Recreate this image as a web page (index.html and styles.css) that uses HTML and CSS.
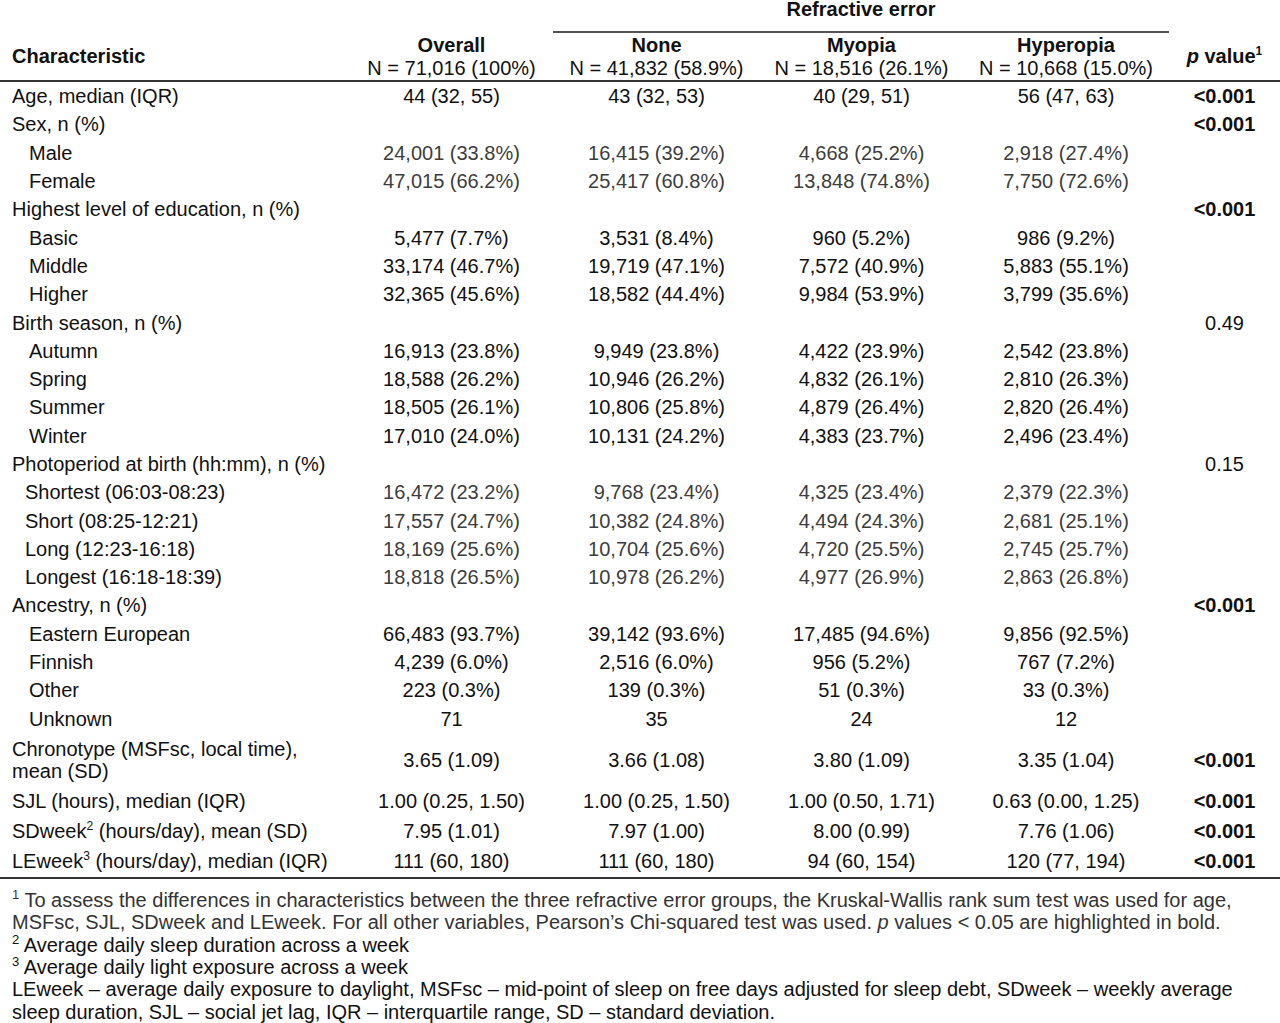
FILE: index.html
```html
<!DOCTYPE html>
<html lang="en">
<head>
    <meta charset="UTF-8">
    <meta name="viewport" content="width=device-width, initial-scale=1.0">
    <title>Refractive Error Characteristics</title>
    <link rel="stylesheet" href="styles.css">
</head>
<body>
    <table class="stats">
        <colgroup>
            <col class="col-char">
            <col class="col-overall">
            <col class="col-none">
            <col class="col-myopia">
            <col class="col-hyper">
            <col class="col-p">
        </colgroup>
        <thead>
            <tr class="head-top">
                <th></th>
                <th></th>
                <th colspan="3" class="spanner">Refractive error</th>
                <th></th>
            </tr>
            <tr class="head-main">
                <th class="label strong">Characteristic</th>
                <th><b>Overall</b><span class="n">N = 71,016 (100%)</span></th>
                <th><b>None</b><span class="n">N = 41,832 (58.9%)</span></th>
                <th><b>Myopia</b><span class="n">N = 18,516 (26.1%)</span></th>
                <th><b>Hyperopia</b><span class="n">N = 10,668 (15.0%)</span></th>
                <th class="strong"><i>p</i> value<sup>1</sup></th>
            </tr>
        </thead>
        <tbody>
            <tr>
                <td class="label">Age, median (IQR)</td>
                <td>44 (32, 55)</td><td>43 (32, 53)</td><td>40 (29, 51)</td><td>56 (47, 63)</td>
                <td class="sig">&lt;0.001</td>
            </tr>
            <tr>
                <td class="label">Sex, n (%)</td>
                <td></td><td></td><td></td><td></td>
                <td class="sig">&lt;0.001</td>
            </tr>
            <tr class="muted">
                <td class="label sub">Male</td>
                <td>24,001 (33.8%)</td><td>16,415 (39.2%)</td><td>4,668 (25.2%)</td><td>2,918 (27.4%)</td><td></td>
            </tr>
            <tr class="muted">
                <td class="label sub">Female</td>
                <td>47,015 (66.2%)</td><td>25,417 (60.8%)</td><td>13,848 (74.8%)</td><td>7,750 (72.6%)</td><td></td>
            </tr>
            <tr>
                <td class="label">Highest level of education, n (%)</td>
                <td></td><td></td><td></td><td></td>
                <td class="sig">&lt;0.001</td>
            </tr>
            <tr>
                <td class="label sub">Basic</td>
                <td>5,477 (7.7%)</td><td>3,531 (8.4%)</td><td>960 (5.2%)</td><td>986 (9.2%)</td><td></td>
            </tr>
            <tr>
                <td class="label sub">Middle</td>
                <td>33,174 (46.7%)</td><td>19,719 (47.1%)</td><td>7,572 (40.9%)</td><td>5,883 (55.1%)</td><td></td>
            </tr>
            <tr>
                <td class="label sub">Higher</td>
                <td>32,365 (45.6%)</td><td>18,582 (44.4%)</td><td>9,984 (53.9%)</td><td>3,799 (35.6%)</td><td></td>
            </tr>
            <tr>
                <td class="label">Birth season, n (%)</td>
                <td></td><td></td><td></td><td></td>
                <td>0.49</td>
            </tr>
            <tr>
                <td class="label sub">Autumn</td>
                <td>16,913 (23.8%)</td><td>9,949 (23.8%)</td><td>4,422 (23.9%)</td><td>2,542 (23.8%)</td><td></td>
            </tr>
            <tr>
                <td class="label sub">Spring</td>
                <td>18,588 (26.2%)</td><td>10,946 (26.2%)</td><td>4,832 (26.1%)</td><td>2,810 (26.3%)</td><td></td>
            </tr>
            <tr>
                <td class="label sub">Summer</td>
                <td>18,505 (26.1%)</td><td>10,806 (25.8%)</td><td>4,879 (26.4%)</td><td>2,820 (26.4%)</td><td></td>
            </tr>
            <tr>
                <td class="label sub">Winter</td>
                <td>17,010 (24.0%)</td><td>10,131 (24.2%)</td><td>4,383 (23.7%)</td><td>2,496 (23.4%)</td><td></td>
            </tr>
            <tr>
                <td class="label">Photoperiod at birth (hh:mm), n (%)</td>
                <td></td><td></td><td></td><td></td>
                <td>0.15</td>
            </tr>
            <tr class="muted">
                <td class="label sub-narrow">Shortest (06:03-08:23)</td>
                <td>16,472 (23.2%)</td><td>9,768 (23.4%)</td><td>4,325 (23.4%)</td><td>2,379 (22.3%)</td><td></td>
            </tr>
            <tr class="muted">
                <td class="label sub-narrow">Short (08:25-12:21)</td>
                <td>17,557 (24.7%)</td><td>10,382 (24.8%)</td><td>4,494 (24.3%)</td><td>2,681 (25.1%)</td><td></td>
            </tr>
            <tr class="muted">
                <td class="label sub-narrow">Long (12:23-16:18)</td>
                <td>18,169 (25.6%)</td><td>10,704 (25.6%)</td><td>4,720 (25.5%)</td><td>2,745 (25.7%)</td><td></td>
            </tr>
            <tr class="muted">
                <td class="label sub-narrow">Longest (16:18-18:39)</td>
                <td>18,818 (26.5%)</td><td>10,978 (26.2%)</td><td>4,977 (26.9%)</td><td>2,863 (26.8%)</td><td></td>
            </tr>
            <tr>
                <td class="label">Ancestry, n (%)</td>
                <td></td><td></td><td></td><td></td>
                <td class="sig">&lt;0.001</td>
            </tr>
            <tr>
                <td class="label sub">Eastern European</td>
                <td>66,483 (93.7%)</td><td>39,142 (93.6%)</td><td>17,485 (94.6%)</td><td>9,856 (92.5%)</td><td></td>
            </tr>
            <tr>
                <td class="label sub">Finnish</td>
                <td>4,239 (6.0%)</td><td>2,516 (6.0%)</td><td>956 (5.2%)</td><td>767 (7.2%)</td><td></td>
            </tr>
            <tr>
                <td class="label sub">Other</td>
                <td>223 (0.3%)</td><td>139 (0.3%)</td><td>51 (0.3%)</td><td>33 (0.3%)</td><td></td>
            </tr>
            <tr>
                <td class="label sub">Unknown</td>
                <td>71</td><td>35</td><td>24</td><td>12</td><td></td>
            </tr>
            <tr class="double">
                <td class="label">Chronotype (MSFsc, local time),<br>mean (SD)</td>
                <td>3.65 (1.09)</td><td>3.66 (1.08)</td><td>3.80 (1.09)</td><td>3.35 (1.04)</td>
                <td class="sig">&lt;0.001</td>
            </tr>
            <tr>
                <td class="label">SJL (hours), median (IQR)</td>
                <td>1.00 (0.25, 1.50)</td><td>1.00 (0.25, 1.50)</td><td>1.00 (0.50, 1.71)</td><td>0.63 (0.00, 1.25)</td>
                <td class="sig">&lt;0.001</td>
            </tr>
            <tr class="tall">
                <td class="label">SDweek<sup>2</sup> (hours/day), mean (SD)</td>
                <td>7.95 (1.01)</td><td>7.97 (1.00)</td><td>8.00 (0.99)</td><td>7.76 (1.06)</td>
                <td class="sig">&lt;0.001</td>
            </tr>
            <tr class="tall">
                <td class="label">LEweek<sup>3</sup> (hours/day), median (IQR)</td>
                <td>111 (60, 180)</td><td>111 (60, 180)</td><td>94 (60, 154)</td><td>120 (77, 194)</td>
                <td class="sig">&lt;0.001</td>
            </tr>
        </tbody>
    </table>

    <div class="notes">
        <p class="muted-note"><sup>1</sup> To assess the differences in characteristics between the three refractive error groups, the Kruskal-Wallis rank sum test was used for age,<br>MSFsc, SJL, SDweek and LEweek. For all other variables, Pearson’s Chi-squared test was used. <i>p</i> values &lt; 0.05 are highlighted in bold.</p>
        <p><sup>2</sup> Average daily sleep duration across a week</p>
        <p><sup>3</sup> Average daily light exposure across a week</p>
        <p>LEweek – average daily exposure to daylight, MSFsc – mid-point of sleep on free days adjusted for sleep debt, SDweek – weekly average<br>sleep duration, SJL – social jet lag, IQR – interquartile range, SD – standard deviation.</p>
    </div>
</body>
</html>
```

FILE: styles.css
```css
body {
    margin: 0;
    background: #ffffff;
    color: #111111;
    font-family: "Liberation Sans", Arial, sans-serif;
    font-size: 20px;
    line-height: 22px;
}
.stats {
    width: 1280px;
    table-layout: fixed;
    border-collapse: collapse;
}
.col-char { width: 350px; }
.col-overall { width: 203px; }
.col-none { width: 207px; }
.col-myopia { width: 203px; }
.col-hyper { width: 206px; }
.col-p { width: 111px; }

.stats th,
.stats td {
    padding: 0;
    text-align: center;
    vertical-align: middle;
    white-space: nowrap;
}
.stats th {
    font-weight: normal;
}
.head-top th {
    height: 31px;
    vertical-align: top;
    line-height: 18px;
}
.head-top .spanner {
    font-weight: bold;
    border-bottom: 2px solid #555555;
}
.head-main th {
    height: 45px;
    line-height: 23px;
    padding-top: 1px;
}
.head-main .n {
    display: block;
}
.head-main th.strong {
    font-weight: bold;
}
.head-main {
    border-bottom: 2px solid #333333;
}
.stats sup {
    font-size: 12px;
    line-height: 0;
    vertical-align: 8px;
}

.stats td {
    height: 28.3px;
}
.stats .label {
    text-align: left;
    padding-left: 12px;
}
.stats .sub {
    padding-left: 29px;
}
.stats .sub-narrow {
    padding-left: 25px;
}
.stats .sig {
    font-weight: bold;
}
.muted td {
    color: #3d3d3d;
}
.muted td.label {
    color: #111111;
}
.double td {
    height: 54px;
}
.tall td {
    height: 30.8px;
}
tbody tr:last-child {
    border-bottom: 2px solid #333333;
}

.notes {
    padding: 10px 12px 0;
}
.notes p {
    margin: 0;
    line-height: 22.4px;
}
.notes sup {
    font-size: 13px;
    line-height: 0;
    vertical-align: 8px;
}
.muted-note {
    color: #333333;
}
```
